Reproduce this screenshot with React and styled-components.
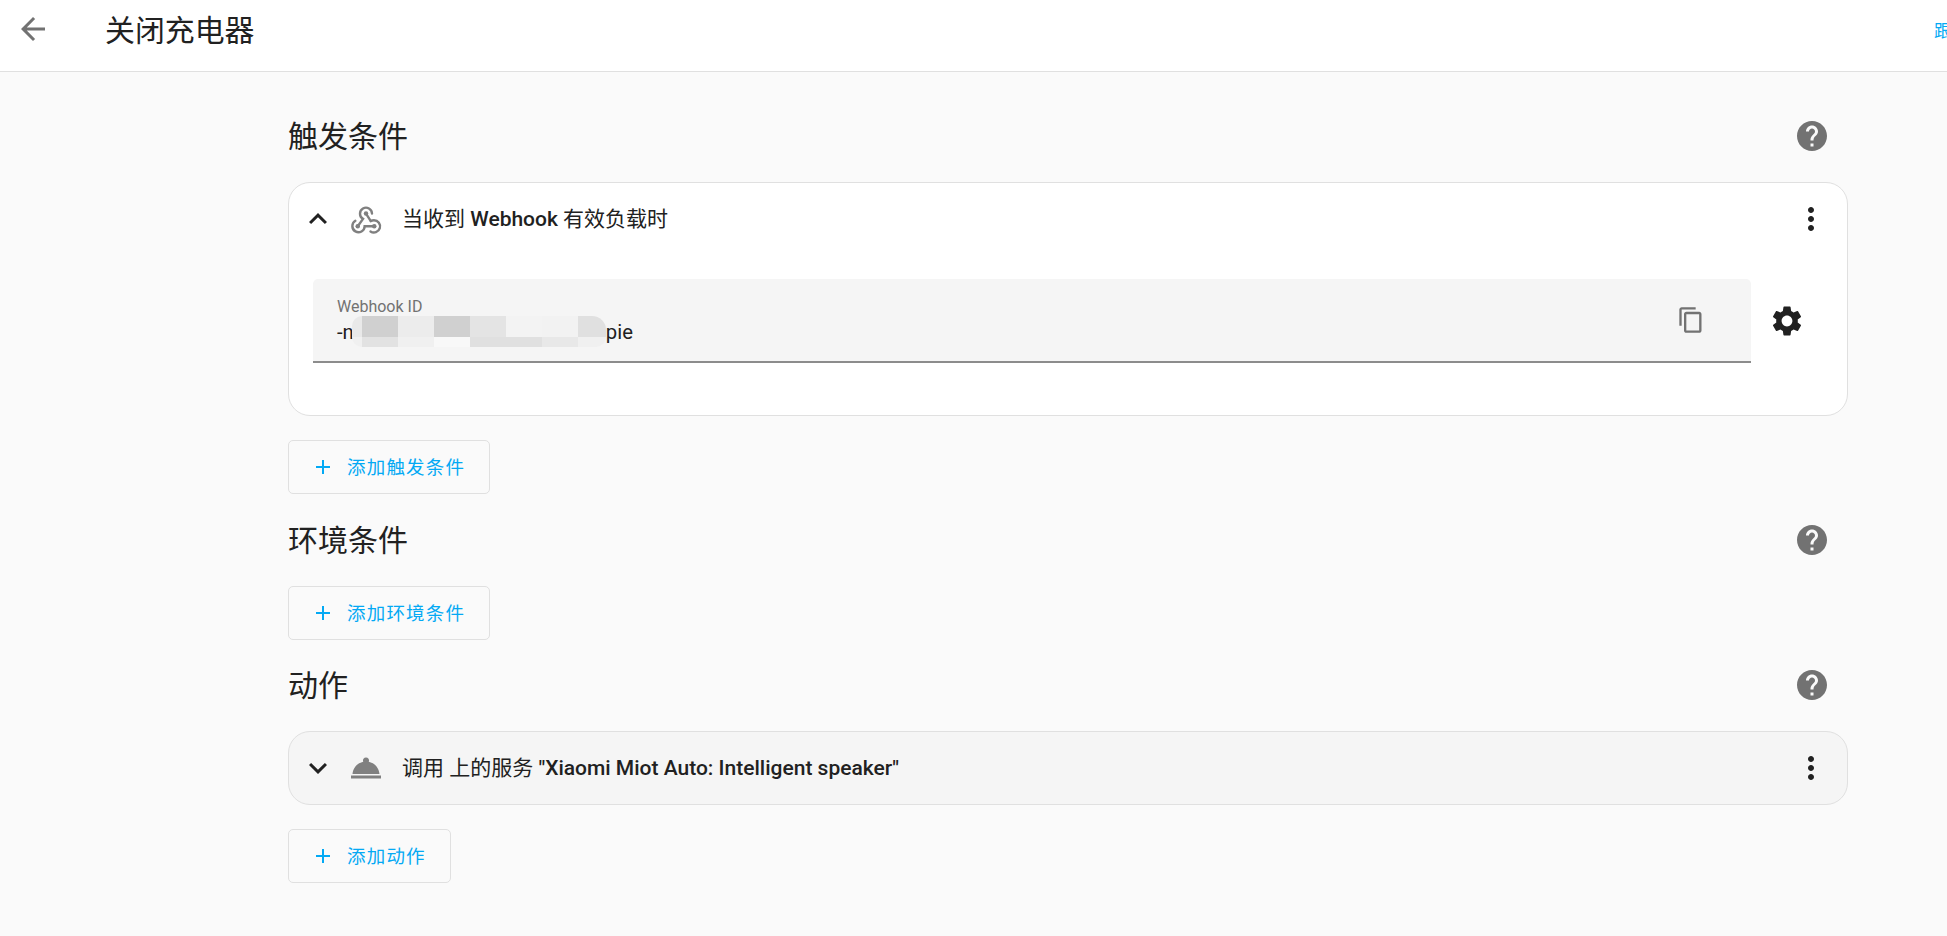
import styled, { createGlobalStyle } from 'styled-components';
import {
  MdArrowBack, MdHelp, MdMoreVert, MdContentCopy, MdSettings,
  MdExpandLess, MdExpandMore, MdAdd, MdRoomService,
} from 'react-icons/md';

const GlobalStyle = createGlobalStyle`
  html, body {
    margin: 0;
    height: 100%;
    overflow: hidden;
    background: #fafafa;
    color: #212121;
    font-family: Roboto, "Noto Sans CJK SC", sans-serif;
  }
  svg {
    flex-shrink: 0;
  }
`;

// blurred-out part of the webhook id, two rows of mosaic blocks
const smudgeTop = ['#e9e9e9', '#d0d0d0', '#ececec', '#d0d0d0', '#e4e4e4', '#f3f3f3', '#f2f2f2', '#e0e0e0'];
const smudgeBottom = ['#f0f0f0', '#e2e2e2', '#f0f0f0', '#f8f8f8', '#e0e0e0', '#e0e0e0', '#e8e8e8', '#f0f0f0'];

function WebhookIcon() {
  return (
    <svg width="36" height="36" viewBox="0 0 24 24" fill="none" stroke="currentColor" strokeWidth="1.6" strokeLinecap="round">
      <path d="M16 8.4a4 4 0 1 0-6 3.5L6.5 16.8" />
      <path d="M12 8.4l3.2 5" />
      <path d="M4.9 13.2a4.1 4.1 0 1 0 6.2 3.6h6.4" />
      <path d="M15 20.3a4.1 4.1 0 1 0 2.3-7.5c-.8 0-1.5.2-2.1.6" />
      <g fill="currentColor" stroke="none">
        <circle cx="12" cy="8.4" r="1.5" />
        <circle cx="6.5" cy="16.8" r="1.5" />
        <circle cx="17.5" cy="16.8" r="1.5" />
      </g>
    </svg>
  );
}

function AddButton({ children }) {
  return (
    <AddBtn>
      <MdAdd size={24} />
      <span>{children}</span>
    </AddBtn>
  );
}

function SectionHead({ children }) {
  return (
    <HeadRow>
      <Heading>{children}</Heading>
      <HelpIcon><MdHelp size={36} /></HelpIcon>
    </HeadRow>
  );
}

export default function App() {
  return (
    <>
      <GlobalStyle />
      <Toolbar>
        <BackIcon><MdArrowBack size={36} /></BackIcon>
        <Title>关闭充电器</Title>
        <TraceLink>跟踪</TraceLink>
      </Toolbar>
      <Main>
        <Section>
          <SectionHead>触发条件</SectionHead>
          <Card>
            <CardHeader>
              <Chevron><MdExpandLess size={36} /></Chevron>
              <RowIcon><WebhookIcon /></RowIcon>
              <RowText>当收到 <b>Webhook</b> 有效负载时</RowText>
              <MoreIcon><MdMoreVert size={36} /></MoreIcon>
            </CardHeader>
            <CardBody>
              <Field>
                <FieldText>
                  <FieldLabel>Webhook ID</FieldLabel>
                  <FieldValue>
                    <span>-n</span>
                    <Smudge>
                      {smudgeTop.map((c, i) => <SmudgeCell key={'t' + i} $color={c} />)}
                      {smudgeBottom.map((c, i) => <SmudgeCell key={'b' + i} $color={c} />)}
                    </Smudge>
                    <span>pie</span>
                  </FieldValue>
                </FieldText>
                <CopyIcon><MdContentCopy size={28} /></CopyIcon>
              </Field>
              <GearIcon><MdSettings size={36} /></GearIcon>
            </CardBody>
          </Card>
          <AddButton>添加触发条件</AddButton>
        </Section>
        <Section>
          <SectionHead>环境条件</SectionHead>
          <AddButton>添加环境条件</AddButton>
        </Section>
        <Section>
          <SectionHead>动作</SectionHead>
          <Card $collapsed>
            <CardHeader>
              <Chevron><MdExpandMore size={36} /></Chevron>
              <RowIcon><MdRoomService size={36} /></RowIcon>
              <RowText>调用 上的服务 <b>"Xiaomi Miot Auto: Intelligent speaker"</b></RowText>
              <MoreIcon><MdMoreVert size={36} /></MoreIcon>
            </CardHeader>
          </Card>
          <AddButton>添加动作</AddButton>
        </Section>
      </Main>
    </>
  );
}

const Toolbar = styled.header`
  display: flex;
  align-items: center;
  height: 58px;
  padding-bottom: 13px;
  background: #fff;
  border-bottom: 1px solid #e0e0e0;
`;

const BackIcon = styled.div`
  display: flex;
  margin-left: 15px;
  color: #727272;
`;

const Title = styled.h1`
  margin: 0 0 2px 54px;
  font-size: 29.9px;
  font-weight: 400;
`;

const TraceLink = styled.div`
  margin-left: auto;
  width: 13px;
  overflow: hidden;
  white-space: nowrap;
  font-size: 17.5px;
  color: #03a9f4;
`;

const Main = styled.main`
  padding: 18.5px 0 0 288px;
  width: 1560px;
`;

const Section = styled.section`
  padding-top: 22.5px;
`;

const HeadRow = styled.div`
  display: flex;
  align-items: center;
  justify-content: space-between;
  height: 46px;
  margin-bottom: 23px;
  padding-right: 18px;
`;

const Heading = styled.h2`
  margin: 0 0 4px;
  font-size: 30px;
  font-weight: 400;
`;

const HelpIcon = styled.div`
  display: flex;
  color: #727272;
`;

const Card = styled.div`
  box-sizing: border-box;
  background: ${(p) => (p.$collapsed ? '#f5f5f5' : '#fff')};
  border: 1px solid #e0e0e0;
  border-radius: 22px;
  margin-bottom: 24px;
`;

const CardHeader = styled.div`
  display: flex;
  align-items: center;
  height: 72px;
  padding: 0 18px 0 11px;
`;

const Chevron = styled.div`
  display: flex;
  color: #212121;
`;

const RowIcon = styled.div`
  display: flex;
  align-items: center;
  justify-content: center;
  width: 30px;
  margin: 0 21px 0 15px;
  color: #808080;
`;

const RowText = styled.div`
  flex: 1;
  font-size: 21px;
  margin-bottom: 4px;
  b {
    font-weight: 500;
  }
`;

const MoreIcon = styled.div`
  display: flex;
  color: #212121;
`;

const CardBody = styled.div`
  display: flex;
  align-items: center;
  gap: 18px;
  padding: 24px 42px 52px 24px;
`;

const Field = styled.div`
  flex: 1;
  display: flex;
  align-items: center;
  justify-content: space-between;
  height: 84px;
  box-sizing: border-box;
  padding: 5px 46px 0 24px;
  background: #f5f5f5;
  border-bottom: 2px solid #8c8c8c;
  border-radius: 5px 5px 0 0;
`;

const FieldText = styled.div`
  display: flex;
  flex-direction: column;
`;

const FieldLabel = styled.div`
  font-size: 16px;
  line-height: 18px;
  color: #727272;
`;

const FieldValue = styled.div`
  display: flex;
  align-items: center;
  height: 31px;
  font-size: 20.3px;
  color: #212121;
`;

const Smudge = styled.div`
  display: grid;
  grid-template-columns: 10px repeat(6, 36px) 28px;
  grid-template-rows: 21px 10px;
  width: 254px;
  height: 31px;
  margin-left: -2px;
  border-radius: 10px 14px 10px 10px;
  overflow: hidden;
`;

const SmudgeCell = styled.div`
  background: ${(p) => p.$color};
`;

const CopyIcon = styled.div`
  display: flex;
  margin-top: -5px;
  color: #727272;
`;

const GearIcon = styled.div`
  display: flex;
  color: #212121;
`;

const AddBtn = styled.button`
  display: flex;
  align-items: center;
  gap: 12px;
  height: 54px;
  padding: 0 24px 2px 22px;
  background: transparent;
  border: 1px solid #e0e0e0;
  border-radius: 5px;
  color: #03a9f4;
  font-family: inherit;
  font-size: 18.5px;
  letter-spacing: 1.2px;
  svg {
    margin-top: 2px;
  }
`;
